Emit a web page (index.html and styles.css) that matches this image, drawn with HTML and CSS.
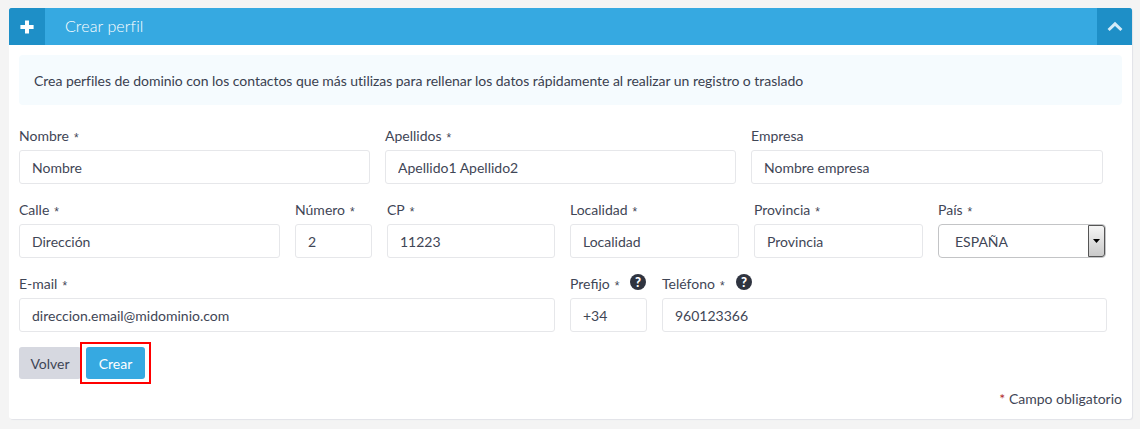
FILE: index.html
```html
<!DOCTYPE html>
<html lang="es">
<head>
<meta charset="utf-8">
<title>Crear perfil</title>
<link rel="stylesheet" href="styles.css">
</head>
<body>
<section class="card">
  <header class="head">
    <span class="head-box head-left">
      <svg class="ico-plus" viewBox="0 0 14 14" width="14" height="14"><path d="M5 .4h4V5h4.6v4H9v4.6H5V9H.4V5H5z" fill="#fff"/></svg>
    </span>
    <h2 class="head-title">Crear perfil</h2>
    <span class="head-box head-right">
      <svg class="ico-up" viewBox="0 0 16 11" width="16" height="11"><path d="M1.6 9 8 2.8 14.4 9" fill="none" stroke="#d4ebf8" stroke-width="3"/></svg>
    </span>
  </header>
  <div class="body">
    <p class="info">Crea perfiles de dominio con los contactos que más utilizas para rellenar los datos rápidamente al realizar un registro o traslado</p>
    <form class="form">
      <div class="row">
        <div class="field w351"><label class="lbl">Nombre <i class="req">*</i></label><input class="inp" value="Nombre"></div>
        <div class="field w351"><label class="lbl">Apellidos <i class="req">*</i></label><input class="inp" value="Apellido1 Apellido2"></div>
        <div class="field w352"><label class="lbl">Empresa</label><input class="inp" value="Nombre empresa"></div>
      </div>
      <div class="row">
        <div class="field w261"><label class="lbl">Calle <i class="req">*</i></label><input class="inp" value="Dirección"></div>
        <div class="field w77"><label class="lbl">Número <i class="req">*</i></label><input class="inp" value="2"></div>
        <div class="field w168"><label class="lbl">CP <i class="req">*</i></label><input class="inp" value="11223"></div>
        <div class="field w169"><label class="lbl">Localidad <i class="req">*</i></label><input class="inp" value="Localidad"></div>
        <div class="field w169"><label class="lbl">Provincia <i class="req">*</i></label><input class="inp" value="Provincia"></div>
        <div class="field w168"><label class="lbl">País <i class="req">*</i></label>
          <div class="sel-wrap">
            <select class="sel"><option>ESPAÑA</option></select>
            <span class="sel-btn"><svg viewBox="0 0 7 4" width="7" height="4"><path d="M0 0h7L3.5 4z" fill="#000"/></svg></span>
          </div>
        </div>
      </div>
      <div class="row">
        <div class="field w536"><label class="lbl">E-mail <i class="req">*</i></label><input class="inp" value="direccion.email@midominio.com"></div>
        <div class="field w77"><label class="lbl">Prefijo <i class="req">*</i><svg class="help" viewBox="0 0 16 16" width="16" height="16"><circle cx="8" cy="8" r="8" fill="#2f3440"/><text x="8" y="12.6" class="help-q">?</text></svg></label><input class="inp" value="+34"></div>
        <div class="field w445"><label class="lbl">Teléfono <i class="req">*</i><svg class="help" viewBox="0 0 16 16" width="16" height="16"><circle cx="8" cy="8" r="8" fill="#2f3440"/><text x="8" y="12.6" class="help-q">?</text></svg></label><input class="inp" value="960123366"></div>
      </div>
      <div class="actions">
        <button type="button" class="btn btn-back">Volver</button>
        <span class="mark"><button type="button" class="btn btn-go">Crear</button></span>
      </div>
    </form>
    <p class="note"><span class="note-star">*</span> Campo obligatorio</p>
  </div>
</section>
</body>
</html>
```
FILE: styles.css
```css
* { box-sizing: border-box; }
html, body { margin: 0; }
body {
  background: #f4f4f4;
  padding: 8px 8px 0 9px;
  font-family: Lato, "Open Sans", sans-serif;
  font-size: 14px;
  color: #3f4656;
  height: 429px;
  overflow: hidden;
}
.card {
  width: 1123px;
  height: 411px;
  background: #fff;
  border-radius: 3px;
  box-shadow: 1px 1px 1px #e2e3e8;
}
.head {
  display: flex;
  align-items: center;
  height: 37px;
  background: #36a9e1;
  border-radius: 3px 3px 0 0;
}
.head-box {
  display: flex;
  align-items: center;
  justify-content: center;
  height: 37px;
  background: #1e8fc7;
}
.head-left { width: 36px; border-top-left-radius: 3px; }
.head-right { width: 35px; border-top-right-radius: 3px; }
.head-title {
  flex: 1;
  margin: 0 0 2px 20px;
  font-size: 16px;
  font-weight: 300;
  letter-spacing: .12px;
  color: #fff;
}
.body { padding: 10px 10px 0; }
.info {
  margin: 0;
  height: 50px;
  line-height: 52px;
  padding-left: 15px;
  background: #f5fbfe;
  border-radius: 4px;
  font-size: 14px;
  letter-spacing: -.035px;
  color: #3a4150;
}
.form { margin-top: 20px; }
.row { display: flex; gap: 15px; margin-bottom: 15px; }
.row:last-of-type { margin-bottom: 0; }
.field { display: flex; flex-direction: column; }
.w77 { width: 77px; }
.w168 { width: 168px; }
.w169 { width: 169px; }
.w261 { width: 261px; }
.w351 { width: 351px; }
.w352 { width: 352px; }
.w445 { width: 445px; }
.w536 { width: 536px; }
.lbl {
  display: flex;
  align-items: center;
  gap: 5px;
  height: 20px;
  padding-top: 2px;
  margin-bottom: 5px;
  font-size: 14px;
  line-height: 18px;
  white-space: nowrap;
}
.req {
  font-family: "Liberation Sans", sans-serif;
  font-style: normal;
  font-size: 12px;
  transform: translateY(2px);
}
.help { margin-left: 6px; margin-top: -4px; flex: none; }
.help-q { font: 900 13px Lato, sans-serif; fill: #fff; text-anchor: middle; }
.inp {
  width: 100%;
  height: 34px;
  padding: 0 12px;
  border: 1px solid #e6e7ea;
  border-radius: 3px;
  background: #fff;
  font: 14px Lato, sans-serif;
  color: #3f4656;
  outline: none;
}
.sel-wrap { position: relative; height: 34px; }
.sel {
  width: 100%;
  height: 34px;
  padding: 0 0 0 16px;
  border: 1px solid #c3c4c6;
  border-radius: 4px;
  background: #fff;
  appearance: none;
  font: 14px Lato, sans-serif;
  color: #3f4656;
}
.sel-btn {
  position: absolute;
  top: 1px;
  right: 1px;
  width: 17px;
  height: 32px;
  display: flex;
  align-items: center;
  justify-content: center;
  border: 1px solid #555;
  border-radius: 0 3px 3px 0;
  background: linear-gradient(#f5f5f5, #c9c9c9);
}
.actions { display: flex; align-items: center; margin-top: 15px; }
.btn {
  height: 32px;
  border: 0;
  border-radius: 3px;
  font: 14px Lato, sans-serif;
}
.btn-back { width: 62px; background: #d6d8e0; color: #3f4656; }
.btn-go { width: 59px; background: #36a9e1; color: #fff; display: block; }
.mark { display: block; border: 2px solid #f00; padding: 3px 4px; margin: -5px 0 -5px -1px; background: #fff; }
.note { margin: 11px 0 0; text-align: right; font-size: 14px; line-height: 17px; color: #3f4656; }
.note-star { color: #b02a2a; }
```
